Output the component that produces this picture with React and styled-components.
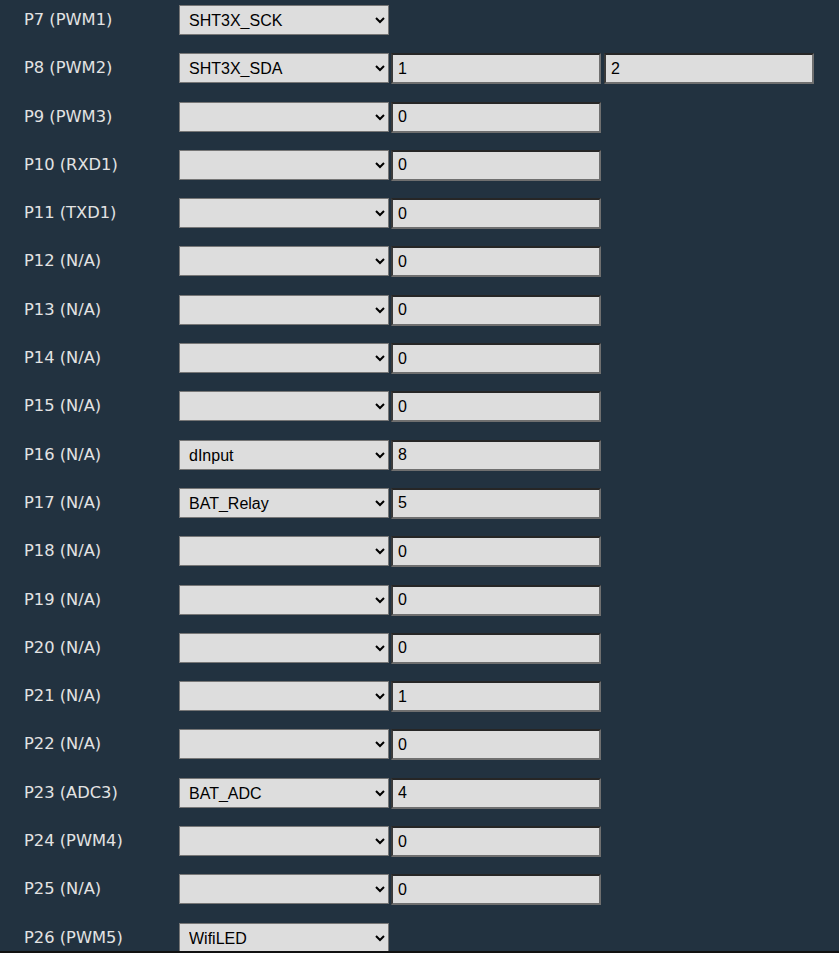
import React from "react";
import styled, { createGlobalStyle } from "styled-components";

const Global = createGlobalStyle`
  html, body { margin: 0; padding: 0; background: #223240; }
  body { font-family: "DejaVu Sans", Verdana, sans-serif; font-size: 16px; color: #e3e3e3; }
`;

const Page = styled.div`
  padding: 5px 0 0 24px;
`;

const Row = styled.div`
  display: flex;
  align-items: flex-start;
  height: 48.3px;
`;

const Label = styled.div`
  width: 155px;
  flex: none;
  height: 30px;
  line-height: 30px;
  font-size: 16.3px;
  white-space: nowrap;
`;

const Select = styled.select`
  box-sizing: border-box;
  width: 210px;
  height: 30px;
  padding: 5px 4px 5px 5px;
  margin: 0;
  font-family: "Liberation Sans", Arial, sans-serif;
  font-size: 16px;
  color: #000;
  background: #dddddd;
  border: 1px solid #767676;
  border-radius: 0;
  flex: none;
`;

const Input = styled.input`
  box-sizing: border-box;
  width: 210px;
  height: 31px;
  margin: 0 0 0 ${(p) => (p.$second ? 3 : 2)}px;
  padding: 5px;
  font-family: "Liberation Sans", Arial, sans-serif;
  font-size: 16px;
  color: #000;
  background: #dddddd;
  border-style: solid;
  border-width: 2px;
  border-color: #262626 #6f6f6f #6f6f6f #3a3a3a;
  border-radius: 0;
  outline: none;
  flex: none;
`;

const BottomEdge = styled.div`
  position: fixed;
  left: 0;
  right: 0;
  bottom: 0;
  height: 2px;
  background: #111;
`;

const rows = [
  { l: "P7 (PWM1)", s: "SHT3X_SCK" },
  { l: "P8 (PWM2)", s: "SHT3X_SDA", v: ["1", "2"] },
  { l: "P9 (PWM3)", s: "", v: ["0"] },
  { l: "P10 (RXD1)", s: "", v: ["0"] },
  { l: "P11 (TXD1)", s: "", v: ["0"] },
  { l: "P12 (N/A)", s: "", v: ["0"] },
  { l: "P13 (N/A)", s: "", v: ["0"] },
  { l: "P14 (N/A)", s: "", v: ["0"] },
  { l: "P15 (N/A)", s: "", v: ["0"] },
  { l: "P16 (N/A)", s: "dInput", v: ["8"] },
  { l: "P17 (N/A)", s: "BAT_Relay", v: ["5"] },
  { l: "P18 (N/A)", s: "", v: ["0"] },
  { l: "P19 (N/A)", s: "", v: ["0"] },
  { l: "P20 (N/A)", s: "", v: ["0"] },
  { l: "P21 (N/A)", s: "", v: ["1"] },
  { l: "P22 (N/A)", s: "", v: ["0"] },
  { l: "P23 (ADC3)", s: "BAT_ADC", v: ["4"] },
  { l: "P24 (PWM4)", s: "", v: ["0"] },
  { l: "P25 (N/A)", s: "", v: ["0"] },
  { l: "P26 (PWM5)", s: "WifiLED" },
];

export default function App() {
  return (
    <>
      <Global />
      <Page>
        {rows.map((r) => (
          <Row key={r.l}>
            <Label>{r.l}</Label>
            <Select defaultValue={r.s}>
              <option value={r.s}>{r.s}</option>
            </Select>
            {(r.v || []).map((v, i) => (
              <Input key={i} $second={i > 0} defaultValue={v} />
            ))}
          </Row>
        ))}
      </Page>
      <BottomEdge />
    </>
  );
}
